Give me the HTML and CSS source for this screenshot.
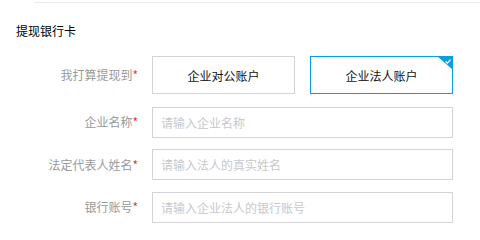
FILE: index.html
```html
<!DOCTYPE html>
<html lang="zh-CN">
<head>
<meta charset="utf-8">
<link rel="stylesheet" href="styles.css">
</head>
<body>
<div class="page">
  <div class="topline"></div>
  <h2 class="title">提现银行卡</h2>
  <form class="form">
    <div class="row row-choice">
      <label class="label">我打算提现到<span class="req">*</span></label>
      <div class="choices">
        <div class="choice">企业对公账户</div>
        <div class="choice active">企业法人账户
          <span class="corner"><svg width="14" height="12" viewBox="0 0 14 12"><path d="M0 0H14V12Z" fill="#0a9ee0"/><path d="M7.6 4.3L9.4 6.1L12.6 2.6" fill="none" stroke="#fff" stroke-width="1.2"/></svg></span>
        </div>
      </div>
    </div>
    <div class="row">
      <label class="label">企业名称<span class="req">*</span></label>
      <input class="input" placeholder="请输入企业名称">
    </div>
    <div class="row">
      <label class="label">法定代表人姓名<span class="req">*</span></label>
      <input class="input" placeholder="请输入法人的真实姓名">
    </div>
    <div class="row">
      <label class="label">银行账号<span class="req">*</span></label>
      <input class="input" placeholder="请输入企业法人的银行账号">
    </div>
  </form>
</div>
</body>
</html>
```

FILE: styles.css
```css
* { box-sizing: border-box; }
body {
  margin: 0;
  background: #fff;
  font-family: "Noto Sans CJK SC", "Noto Sans", sans-serif;
  font-size: 12px;
  color: #333;
}
.page { width: 480px; height: 234px; overflow: hidden; }
.topline {
  margin: 2px 0 0 34px;
  height: 1px;
  background: #ececf4;
}
.title {
  margin: 20px 0 0 16px;
  font-size: 12px;
  font-weight: normal;
  line-height: 16px;
  color: #000;
}
.form { margin-top: 17px; display: flex; flex-direction: column; gap: 11.5px; }
.row { display: flex; align-items: center; }
.row-choice { margin-bottom: 1px; }
.label {
  width: 138px;
  text-align: right;
  color: #999;
  padding-right: 0;
  margin-right: 14px;
  line-height: 16px;
}
.req { color: #f0303a; }
.choices { display: flex; gap: 15px; }
.choice {
  position: relative;
  width: 143px;
  height: 38px;
  border: 1px solid #d4d4d8;
  display: flex;
  align-items: center;
  justify-content: center;
  color: #111;
}
.choice.active { border-color: #0a9ee0; }
.corner { position: absolute; top: 0; right: 0; line-height: 0; }
.input {
  width: 301px;
  height: 31px;
  border: 1px solid #d4d4d8;
  padding: 0 8px;
  font-family: inherit;
  font-size: 12px;
  outline: none;
  color: #333;
}
.input::placeholder { color: #c8c8cc; }
```
